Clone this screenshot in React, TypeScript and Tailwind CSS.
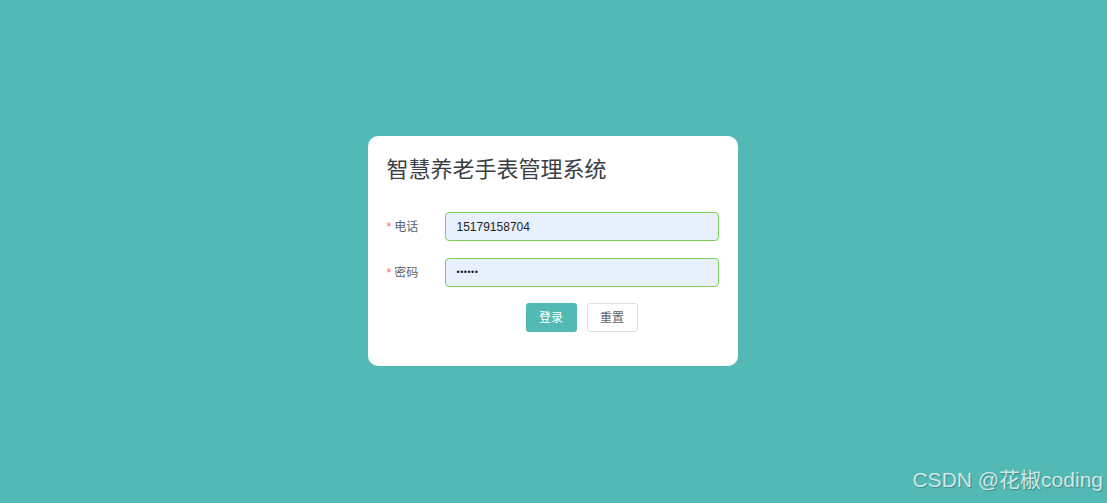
const font = {
  fontFamily: '"Liberation Sans", Arial, "Noto Sans CJK SC", sans-serif',
};

function Field({ label, value, dots }: { label: string; value: string; dots?: boolean }) {
  return (
    <div className="flex items-center h-[29px]">
      <label className="w-[58px] text-[12px] text-[#606266] flex items-center">
        <span className="text-[#f56c6c] mr-[3px]">*</span>
        {label}
      </label>
      <div className="flex-1 h-[29px] rounded-[4px] border border-[#7dcf5c] bg-[#e8f0fe] flex items-center px-[11px]">
        {dots ? (
          <span className="text-[9px] tracking-[0.5px] text-[#222]">{value}</span>
        ) : (
          <span className="text-[12px] text-[#222]">{value}</span>
        )}
      </div>
    </div>
  );
}

export default function App() {
  return (
    <div className="relative w-full h-[503px] bg-[#52b9b4] flex items-center justify-center" style={font}>
      <div className="w-[370px] h-[230px] bg-white rounded-[10px] px-[19px] pt-[19px] -mt-[1px] mr-[2px]">
        <h1 className="text-[22px] leading-[30px] text-[#3a3f45]">智慧养老手表管理系统</h1>
        <div className="mt-[27px] flex flex-col gap-[17px]">
          <Field label="电话" value="15179158704" />
          <Field label="密码" value="••••••" dots />
        </div>
        <div className="mt-[16px] pl-[58px] flex justify-center gap-[10px]">
          <button className="w-[51px] h-[29px] rounded-[3px] bg-[#52b9b4] text-white text-[12px]">登录</button>
          <button className="w-[51px] h-[29px] rounded-[3px] bg-white border border-[#dcdfe6] text-[#606266] text-[12px]">重置</button>
        </div>
      </div>
      <div className="absolute right-[4px] bottom-[8px] text-[21px] text-white/75 [text-shadow:1px_1px_1px_rgba(0,0,0,0.25)]">
        CSDN @花椒coding
      </div>
    </div>
  );
}
